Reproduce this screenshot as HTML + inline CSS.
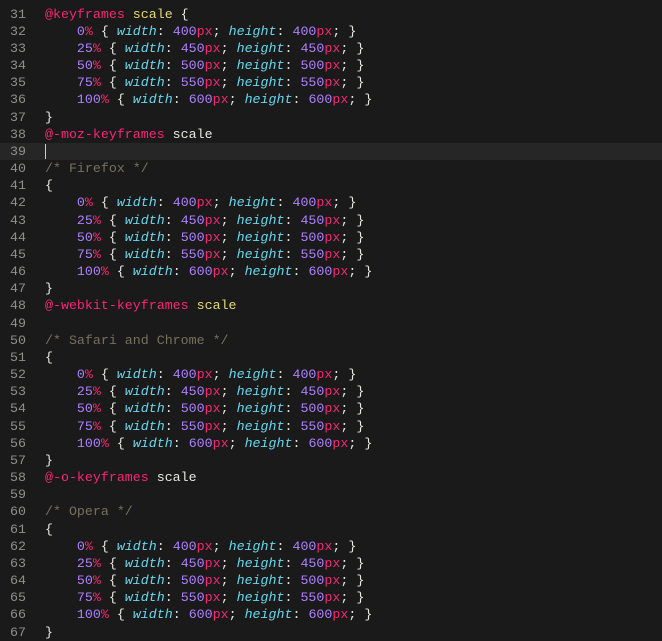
<!DOCTYPE html><html><head><style>
body{margin:0;background:#1a1a1a;width:662px;height:635px;overflow:hidden;font-family:"Liberation Mono",monospace;font-size:13.3px;color:#e8e8e2}
.l{position:absolute;left:0;width:662px;height:17.17px;line-height:17.17px;white-space:pre}
.n{position:absolute;left:10px;color:#8f908a;width:24px}
.c{position:absolute;left:45px}
.k{color:#f92672}.y{color:#e6db74}.p{color:#ae81ff}.u{color:#f92672}.w{color:#66d9ef;font-style:italic}.m{color:#75715e}
.hl{background:#262626}
</style></head><body>
<div id="r"></div>
<script>
const f=(a,b)=>`<span class="p">${a}</span><span class="u">%</span> { <span class="w">width</span>: <span class="p">${b}</span><span class="u">px</span>; <span class="w">height</span>: <span class="p">${b}</span><span class="u">px</span>; }`;
const kf=()=>["    "+f(0,400),"    "+f(25,450),"    "+f(50,500),"    "+f(75,550),"    "+f(100,600)];
let L=['<span class="k">@keyframes</span> <span class="y">scale</span> {',...kf(),'}',
'<span class="k">@-moz-keyframes</span> scale','','<span class="m">/* Firefox */</span>','{',...kf(),'}',
'<span class="k">@-webkit-keyframes</span> <span class="y">scale</span>','','<span class="m">/* Safari and Chrome */</span>','{',...kf(),'}',
'<span class="k">@-o-keyframes</span> scale','','<span class="m">/* Opera */</span>','{',...kf(),'}'];
let h='';L.forEach((s,i)=>{h+=`<div class="l${i==8?' hl':''}" style="top:${5.5+i*17.17}px"><span class="n">${31+i}</span><span class="c">${s}${i==8?'<span style="border-left:1px solid #ccc"></span>':''}</span></div>`});
document.getElementById('r').innerHTML=h;
</script>
</body></html>
